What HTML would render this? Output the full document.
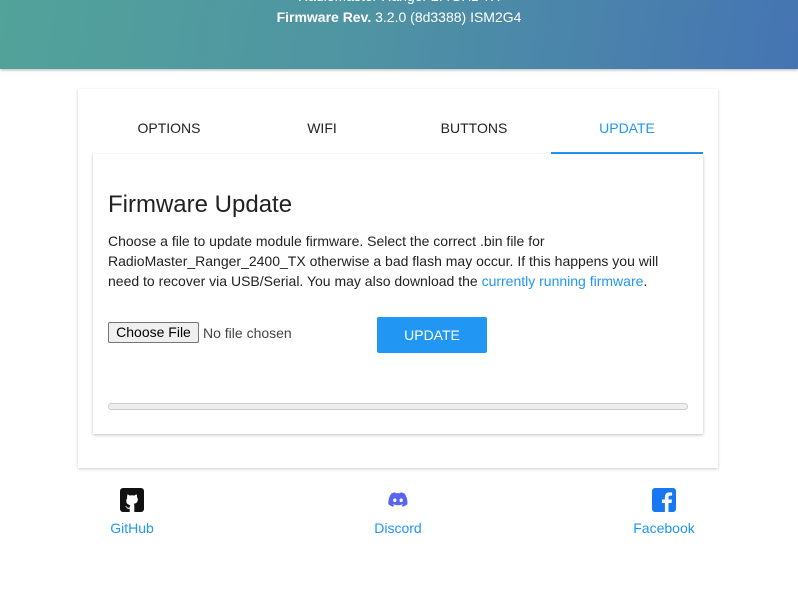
<!DOCTYPE html>
<html><head><style>
*{box-sizing:border-box}
body{margin:0;width:798px;height:597px;overflow:hidden;font-family:"Liberation Sans",Arial,sans-serif;background:#fff;position:relative}
.hdr{position:absolute;left:0;top:0;width:798px;height:69px;background:linear-gradient(100deg,#52a39a 0%,#4f94a3 45%,#4574b3 100%);box-shadow:0 1px 3px rgba(0,0,0,.3);color:#fff;text-align:center;font-size:14px}
.card{position:absolute;left:78px;top:89px;width:640px;height:379px;background:#fff;box-shadow:0 1px 3px rgba(0,0,0,.2)}
.tab{position:absolute;top:120px;font-size:14px;color:#222;width:152px;text-align:center}
.ul{position:absolute;left:551px;top:152px;width:152px;height:2px;background:#2196f3}
.panel{position:absolute;left:93px;top:154px;width:610px;height:280px;background:#fff;box-shadow:0 1px 3px rgba(0,0,0,.25)}
h2{position:absolute;left:108px;top:191px;margin:0;font-weight:400;font-size:24px;color:#222}
p{position:absolute;left:108px;top:231px;margin:0;width:580px;font-size:14px;line-height:20px;color:#222}
a{color:#2196f3;text-decoration:none}
.cf{position:absolute;left:108px;top:322px;width:91px;height:21px;border:1px solid #767676;border-radius:2px;background:#efefef;font-size:14px;text-align:center;line-height:19px;color:#000}
.nf{position:absolute;left:203px;top:325px;font-size:14px;color:#444}
.btn{position:absolute;left:377px;top:317px;width:110px;height:36px;background:#2196f3;border-radius:2px;color:#fff;font-size:14px;text-align:center;line-height:36px}
.pb{position:absolute;left:108px;top:403px;width:580px;height:7px;border:1px solid #ccc;border-radius:4px;background:#eee}
.ft{position:absolute;top:520px;font-size:14px;color:#2196f3;text-align:center;width:100px}
</style></head><body>
<div class="hdr"><div style="position:absolute;top:-12px;width:100%">RadioMaster Ranger 2.4GHz TX</div><div style="position:absolute;top:9px;width:100%"><b>Firmware Rev.</b> 3.2.0 (8d3388) ISM2G4</div></div>
<div class="card"></div>
<div class="tab" style="left:93px">OPTIONS</div>
<div class="tab" style="left:246px">WIFI</div>
<div class="tab" style="left:398px">BUTTONS</div>
<div class="tab" style="left:551px;color:#2196f3">UPDATE</div>
<div class="ul"></div>
<div class="panel"></div>
<h2>Firmware Update</h2>
<p>Choose a file to update module firmware. Select the correct .bin file for RadioMaster_Ranger_2400_TX otherwise a bad flash may occur. If this happens you will need to recover via USB/Serial. You may also download the <a>currently running firmware</a>.</p>
<div class="cf">Choose File</div><div class="nf">No file chosen</div>
<div class="btn">UPDATE</div>
<div class="pb"></div>
<svg style="position:absolute;left:120px;top:488px" width="24" height="24" viewBox="0 0 24 24"><rect width="24" height="24" rx="3" fill="#111"/><path d="M7.2 6.5c1 0 2 .6 2.6 1.1a8 8 0 0 1 4.4 0c.6-.5 1.6-1.1 2.6-1.1.3.8.3 1.8.1 2.5.6.7.9 1.5.9 2.5 0 3-1.9 4-4.1 4.3.4.4.6 1 .6 1.8V24h-4.6v-3.2c-1.2.3-2.6.1-3.2-1.3-.4-.8-.9-1.2-1.4-1.4.6-.3 1.3 0 1.8.7.5.8 1.3 1.1 2.8.8v-.8c0-.7.2-1.3.6-1.7-2.2-.3-4-1.3-4-4.3 0-1 .3-1.8.9-2.5-.2-.7-.2-1.7.1-2.5z" fill="#fff"/></svg>
<svg style="position:absolute;left:388px;top:492px" width="20" height="16" viewBox="0 0 20 16"><path d="M16.5 1.5A16 16 0 0 0 12.6.3l-.5 1a15 15 0 0 0-4.4 0l-.5-1a16 16 0 0 0-3.9 1.2C.8 5.2.1 8.8.4 12.4a16 16 0 0 0 4.8 2.4l1-1.6a10 10 0 0 1-1.6-.8l.4-.3a11.5 11.5 0 0 0 9.8 0l.4.3-1.6.8 1 1.6a16 16 0 0 0 4.8-2.4c.4-4.2-.7-7.8-2.9-10.9zM6.8 10.2c-.9 0-1.700-.9-1.7-1.9s.7-1.9 1.7-1.9 1.7.9 1.7 1.9-.8 1.9-1.7 1.9zm6.4 0c-.9 0-1.7-.9-1.7-1.9s.7-1.9 1.7-1.9 1.7.9 1.7 1.9-.7 1.9-1.7 1.9z" fill="#5865f2"/></svg>
<svg style="position:absolute;left:652px;top:488px" width="24" height="24" viewBox="0 0 24 24"><rect width="24" height="24" rx="3" fill="#1877f2"/><path d="M16.5 24v-9h3l.5-3.5h-3.5V9.3c0-1 .3-1.7 1.8-1.7h1.8V4.5c-.3 0-1.4-.1-2.7-.1-2.7 0-4.5 1.6-4.5 4.6v2.5h-3V15h3v9z" fill="#fff"/></svg>
<div class="ft" style="left:82px">GitHub</div>
<div class="ft" style="left:348px">Discord</div>
<div class="ft" style="left:614px">Facebook</div>
</body></html>
